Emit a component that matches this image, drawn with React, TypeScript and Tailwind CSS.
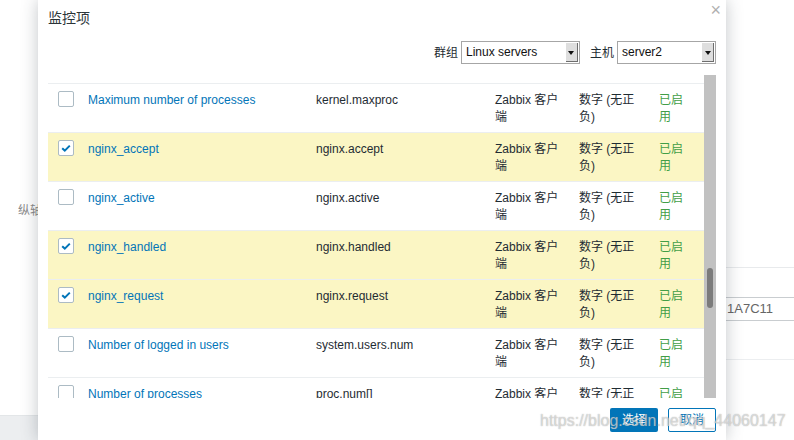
import React from "react";

interface Item {
    name: string;
    key: string;
    checked: boolean;
}

const items: Item[] = [
    { name: "Maximum number of processes", key: "kernel.maxproc", checked: false },
    { name: "nginx_accept", key: "nginx.accept", checked: true },
    { name: "nginx_active", key: "nginx.active", checked: false },
    { name: "nginx_handled", key: "nginx.handled", checked: true },
    { name: "nginx_request", key: "nginx.request", checked: true },
    { name: "Number of logged in users", key: "system.users.num", checked: false },
    { name: "Number of processes", key: "proc.num[]", checked: false },
];

const font = "font-['Liberation_Sans','Noto_Sans_CJK_SC',sans-serif]";

const Checkbox = ({ checked }: { checked: boolean }) => (
    <div className="w-[16px] h-[16px] bg-white border border-[#acbbc4] rounded-[2px] flex items-center justify-center">
        {checked && (
            <svg width="12" height="12" viewBox="0 0 12 12">
                <path d="M2.2 6.2 L4.8 8.6 L9.8 3.6" fill="none" stroke="#0275b8" strokeWidth="2" />
            </svg>
        )}
    </div>
);

const Select = ({ value, width }: { value: string; width: string }) => (
    <div className={`${width} h-[23px] flex border border-[#a6a6a6] bg-white`}>
        <div className="flex-1 pl-[4px] text-[12px] leading-[21px] text-[#111]">{value}</div>
        <div className="w-[12px] my-[1px] mr-[1px] bg-[#dedede] border-r border-b border-[#6e6e6e] flex items-center justify-center pt-[2px]">
            <div className="w-0 h-0 border-l-[3px] border-r-[3px] border-t-[4px] border-l-transparent border-r-transparent border-t-[#111]" />
        </div>
    </div>
);

export default function App() {
    return (
        <div className={`relative w-[794px] h-[440px] overflow-hidden bg-white ${font}`}>
            {/* page behind the dialog */}
            <div className="flex h-full">
                <div className="w-[38px] flex flex-col">
                    <div className="flex-1 pl-[18px] pt-[202px] text-[12px] text-[#8a8a8a] whitespace-nowrap">纵轴</div>
                    <div className="h-[25px] bg-[#eceef0] border-t border-[#e3e6e8]" />
                </div>
                <div className="flex-1" />
                <div className="w-[68px] pt-[267px]">
                    <div className="border-t border-[#e8eaec] h-[30px]" />
                    <div className="h-[24px] border-y border-[#c9cdd0] text-[13px] leading-[22px] text-[#666] pl-[1px]">1A7C11</div>
                    <div className="h-[38px]" />
                    <div className="border-t border-[#eceef0]" />
                </div>
            </div>

            {/* dialog */}
            <div className="absolute left-[38px] top-0 w-[688px] h-[440px] bg-white shadow-[0_0_16px_rgba(40,50,60,0.28)] flex flex-col">
                <button className="absolute right-[5px] top-[1px] text-[18px] leading-[18px] text-[#b0b0b0]">×</button>

                <div className="h-[36px] pl-[10px] pt-[9px] text-[14px] leading-[18px] text-[#2b3438]">监控项</div>

                <div className="mt-[5px] flex items-center justify-end gap-[10px] pr-[10px] text-[12px] text-[#1f2c33]">
                    <div className="flex items-center gap-[3px]">
                        <span>群组</span>
                        <Select value="Linux servers" width="w-[119px]" />
                    </div>
                    <div className="flex items-center gap-[3px]">
                        <span>主机</span>
                        <Select value="server2" width="w-[99px]" />
                    </div>
                </div>

                {/* list */}
                <div className="mt-[11px] mx-[10px] h-[323px] flex">
                    <div className="flex-1 overflow-hidden">
                        <div className="h-[8px]" />
                        {items.map(item => (
                            <div
                                key={item.name}
                                className={`h-[49px] flex border-t border-[#ebeef0] text-[12px] leading-[17px] ${item.checked ? "bg-[#fbf6c4]" : "bg-white"}`}
                            >
                                <div className="w-[40px] pl-[10px] pt-[7px]">
                                    <Checkbox checked={item.checked} />
                                </div>
                                <div className="w-[228px] pt-[8px] text-[#0275b8]">{item.name}</div>
                                <div className="w-[179px] pt-[8px] text-[#1f2c33]">{item.key}</div>
                                <div className="w-[84px] pt-[8px] text-[#1f2c33]">
                                    <div className="w-[70px]">Zabbix 客户端</div>
                                </div>
                                <div className="w-[80px] pt-[8px] text-[#1f2c33]">
                                    <div className="w-[60px]">数字 (无正负)</div>
                                </div>
                                <div className="w-[45px] pt-[8px] text-[#429e47]">
                                    <div className="w-[30px]">已启用</div>
                                </div>
                            </div>
                        ))}
                    </div>
                    <div className="w-[12px] bg-[#c1c1c1] pt-[193px] flex justify-center">
                        <div className="w-[6px] h-[40px] rounded-[3px] bg-[#7b7b7b]" />
                    </div>
                </div>

                <div className="pt-[10px] pr-[10px] flex justify-end gap-[10px] text-[12px]">
                    <button className="w-[48px] h-[24px] bg-[#0275b8] text-white rounded-[2px]">选择</button>
                    <button className="w-[48px] h-[24px] bg-white border border-[#0275b8] text-[#0275b8] rounded-[2px]">取消</button>
                </div>
            </div>

            {/* watermark */}
            <div className="absolute left-[540px] top-[410px] text-[16px] leading-[22px] text-[rgba(255,255,255,0.55)] [text-shadow:0_0_1px_rgba(110,110,110,0.7)] whitespace-nowrap pointer-events-none">
                https://blog.csdn.net/qq_44060147
            </div>
        </div>
    );
}
